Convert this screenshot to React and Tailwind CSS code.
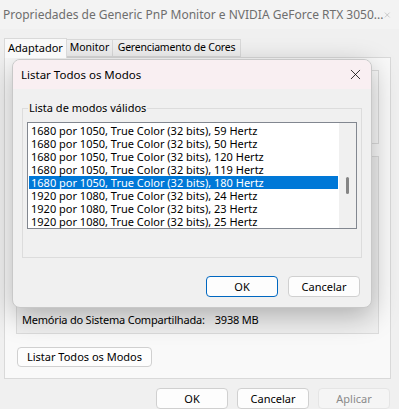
import { X } from 'lucide-react';

const modes = [
  '1680 por 1050, True Color (32 bits), 59 Hertz',
  '1680 por 1050, True Color (32 bits), 50 Hertz',
  '1680 por 1050, True Color (32 bits), 120 Hertz',
  '1680 por 1050, True Color (32 bits), 119 Hertz',
  '1680 por 1050, True Color (32 bits), 180 Hertz',
  '1920 por 1080, True Color (32 bits), 24 Hertz',
  '1920 por 1080, True Color (32 bits), 23 Hertz',
  '1920 por 1080, True Color (32 bits), 25 Hertz',
];

function WinButton({ children, primary, disabled }) {
  return (
    <button
      className={
        'w-[72px] h-[21px] rounded-[4px] border flex items-center justify-center text-[11px] leading-none ' +
        (primary
          ? 'border-[#0067c0] bg-[#fdfdfd] text-black'
          : disabled
          ? 'border-[#e5e5e5] bg-[#f5f5f5] text-[#8a8a8a]'
          : 'border-[#d0d0d0] bg-[#fdfdfd] text-black')
      }
    >
      {children}
    </button>
  );
}

function ModesDialog() {
  return (
    <div className="absolute left-[12px] top-[59px] w-[360px] h-[249px] rounded-[8px] bg-[#f0f0f0] border border-[#c8c8c8] shadow-[0_8px_28px_rgba(0,0,0,0.28)] flex flex-col overflow-hidden">
      {/* barra de título */}
      <div className="h-[29px] bg-[#f9eff2] flex items-center justify-between pl-[8px] pr-[7px] shrink-0">
        <span className="text-[11.5px] text-black">Listar Todos os Modos</span>
        <X size={17} strokeWidth={1.1} className="text-black" />
      </div>

      {/* grupo */}
      <div className="relative mx-[9px] mt-[19px] h-[150px] border border-[#dcdcdc]">
        <span className="absolute left-[5px] -top-[8px] px-[1px] bg-[#f0f0f0] text-[11px] leading-[14px] text-black">
          Lista de modos válidos
        </span>
        <div className="mx-[4px] mt-[13px] h-[107px] border border-[#828790] bg-white flex overflow-hidden">
          <div className="flex-1 pl-[1px] pt-[1px] overflow-hidden">
            {modes.map((m, i) => (
              <div
                key={i}
                className={
                  'h-[13px] pl-[2px] text-[11px] leading-[13px] whitespace-nowrap ' +
                  (i === 4 ? 'bg-[#0078d7] text-white' : 'text-black')
                }
              >
                {m}
              </div>
            ))}
          </div>
          <div className="w-[17px] ml-[1px] bg-[#f0f0f0] relative">
            <div className="absolute left-[7px] top-[54px] w-[3px] h-[17px] rounded-full bg-[#858585]" />
          </div>
        </div>
      </div>

      <div className="flex-1" />
      <div className="flex justify-end gap-[10px] pr-[11px] pb-[10px]">
        <WinButton primary>OK</WinButton>
        <WinButton>Cancelar</WinButton>
      </div>
    </div>
  );
}

export default function App() {
  return (
    <div
      className="relative w-[399px] h-[409px] bg-[#f0f0f0] overflow-hidden flex flex-col"
      style={{ fontFamily: '"Noto Sans", "Liberation Sans", sans-serif' }}
    >
      {/* barra de título da janela */}
      <div className="h-[29px] bg-[#f3f3f3] flex items-center justify-between pl-[3px] pr-[7px] shrink-0">
        <span className="text-[12px] text-[#6e6e6e] whitespace-nowrap">
          Propriedades de Generic PnP Monitor e NVIDIA GeForce RTX 3050...
        </span>
        <X size={16} strokeWidth={1} className="text-[#7a7a7a]" />
      </div>

      {/* abas */}
      <div className="flex items-end pl-[4px] mt-[8px] h-[20px] text-[11px] text-black whitespace-nowrap">
        <div className="h-[20px] w-[63px] border border-b-0 border-[#d9d9d9] bg-[#f9f9f9] flex items-center justify-center relative z-10 -mb-px">
          Adaptador
        </div>
        <div className="h-[18px] w-[46px] border border-l-0 border-[#d9d9d9] bg-[#f0f0f0] flex items-center justify-center text-[10.5px]">
          Monitor
        </div>
        <div className="h-[18px] w-[128px] border border-l-0 border-[#d9d9d9] bg-[#f0f0f0] flex items-center justify-center text-[10.5px] tracking-[-0.2px]">
          Gerenciamento de Cores
        </div>
      </div>

      {/* painel */}
      <div className="ml-[4px] mr-[8px] h-[323px] border border-[#d9d9d9] bg-[#f9f9f9] pt-[12px] px-[11px]">
        <div className="h-[74px] border border-[#dcdcdc]" />
        <div className="mt-[12px] h-[178px] border border-[#dcdcdc] bg-[#f0f0f0] flex flex-col justify-end pb-[4px] pl-[5px]">
          <div className="flex gap-[10px] text-[11px] tracking-[-0.2px] text-black whitespace-nowrap">
            <span>Memória do Sistema Compartilhada:</span>
            <span>3938 MB</span>
          </div>
        </div>
        <button className="mt-[13px] ml-[1px] w-[135px] h-[20px] rounded-[4px] border border-[#d0d0d0] bg-[#fdfdfd] text-[11px] text-black flex items-center justify-center">
          Listar Todos os Modos
        </button>
      </div>

      {/* botões */}
      <div className="flex justify-end gap-[9px] pr-[9px] mt-[9px]">
        <WinButton>OK</WinButton>
        <WinButton>Cancelar</WinButton>
        <WinButton disabled>Aplicar</WinButton>
      </div>

      <ModesDialog />
    </div>
  );
}
